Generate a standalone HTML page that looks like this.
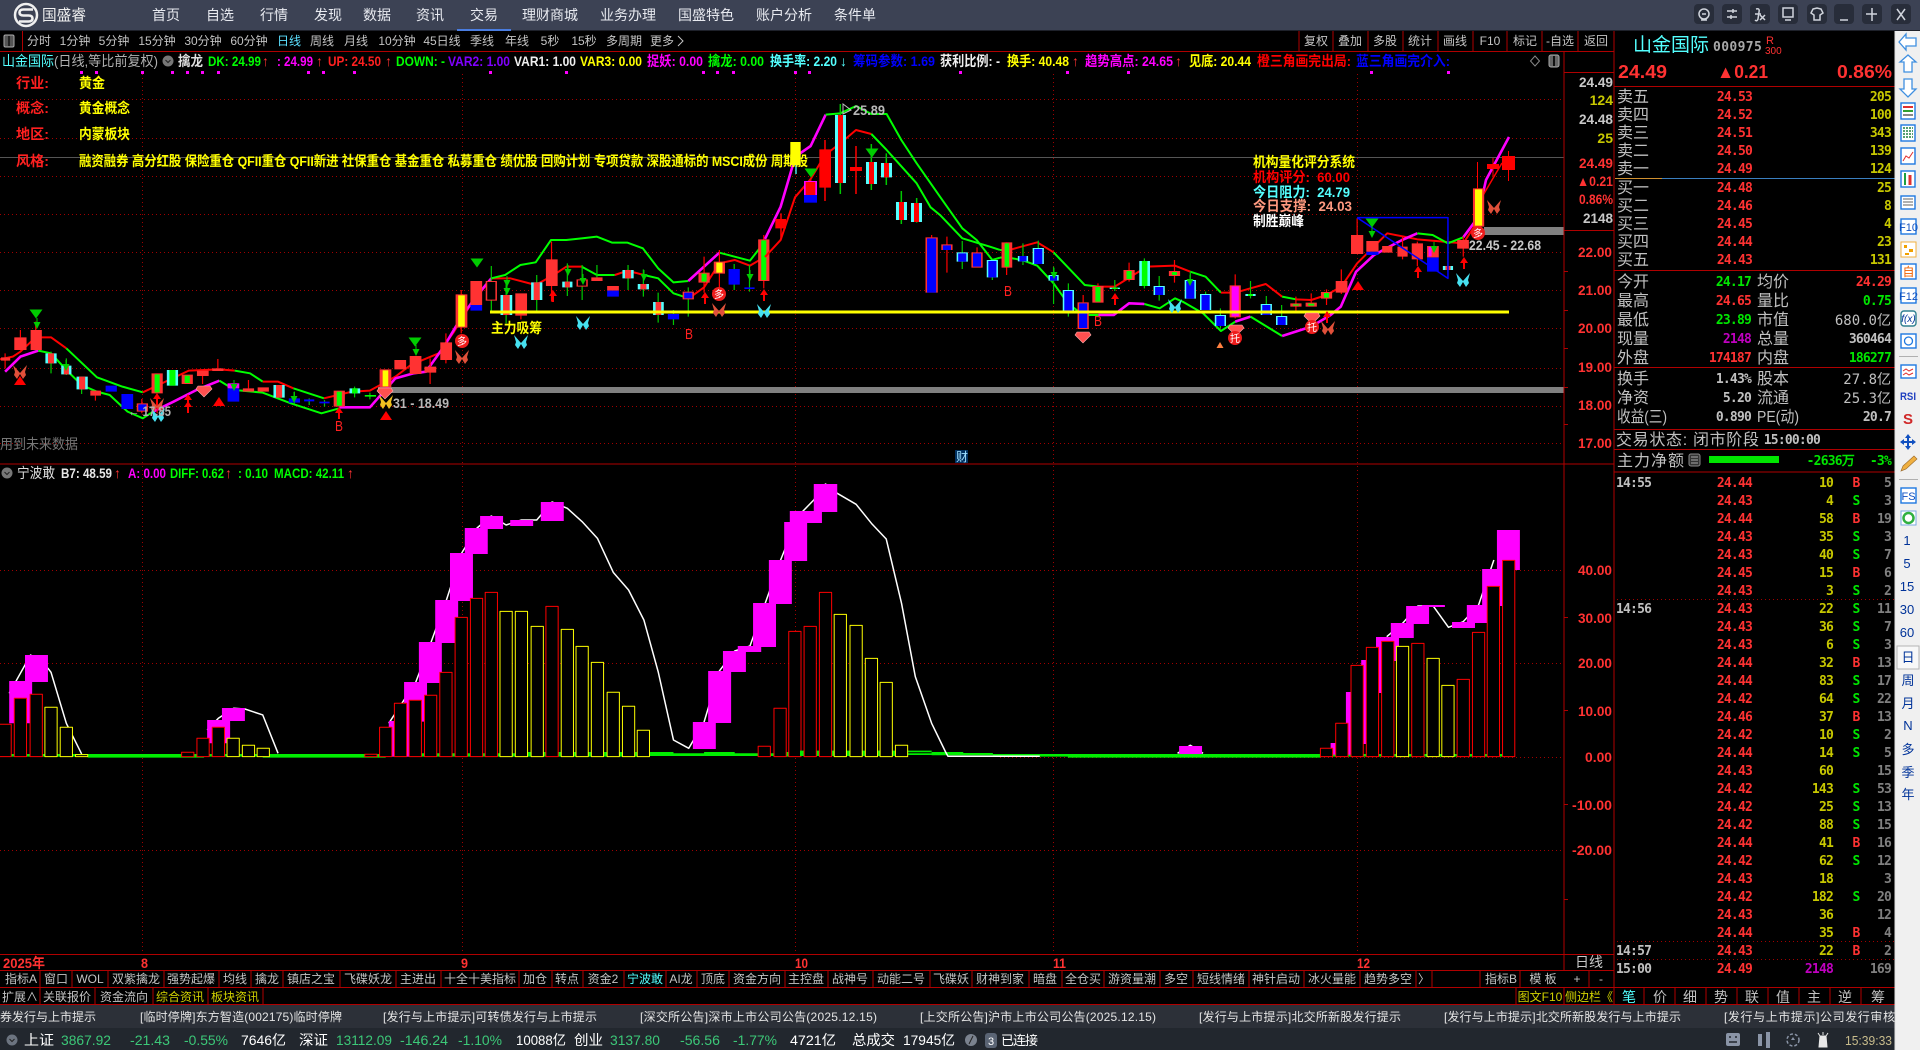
<!DOCTYPE html>
<html><head><meta charset="utf-8"><title>国盛睿</title>
<style>
html,body{margin:0;padding:0;background:#000;width:1920px;height:1050px;overflow:hidden}
svg{display:block;position:absolute;left:0;top:0}
text{font-family:"Liberation Sans","Noto Sans CJK SC",sans-serif;font-size:12px;white-space:pre}
.m{font-family:"DejaVu Sans Mono","Liberation Mono",monospace;font-size:13px;letter-spacing:-.8px;font-weight:bold}
.c{font-size:16px;fill:#c0c0c0}
.b{font-weight:bold}
.h{font-size:14px;font-weight:bold}
.e{text-anchor:end}
.mid{text-anchor:middle}
.nav{font-size:14px;fill:#e8eaf0;text-anchor:middle}
.tb{fill:#c4c4c4;font-size:12px;text-anchor:middle}
.r{fill:#ff3232}.g{fill:#00e600}.y{fill:#c8c800}.w{fill:#c0c0c0}.p{fill:#c000c0}.d{fill:#808080}
.ln{stroke:#b00000;stroke-width:1;fill:none}
.dot{stroke:#a00000;stroke-width:1;stroke-dasharray:1 3;fill:none}
.s{vector-effect:non-scaling-stroke;fill:none;stroke-linejoin:round}
.l2{stroke-width:2}
.bl{fill:#003399;font-size:13px;text-anchor:middle}
.ib{fill:#fff;stroke:#1e78e0;stroke-width:1.4}
</style></head><body>
<svg width="1920" height="1050" viewBox="0 0 1920 1050" xmlns="http://www.w3.org/2000/svg">
<defs>
<path id="bf" d="M0 1L-7-7-5 0-6 3-3 7 0 2 3 7 6 3 5 0 7-7z"/>
<path id="gem" d="M-6-5H6L8-2 0 6-8-2z"/>
<path id="tu" d="M0-5 6 4H-6z"/>
<path id="td" d="M-6.500-4.500H6.500L0 4.500z"/>
<path id="ga" d="M-3.500-3h7L0 4zM-.5-7H.5V-3H-.5z"/>
<path id="ra" d="M0-6 4 0H1V6H-1V0H-4z"/>
</defs>
<rect width="1920" height="1050" fill="#000"/>

<!-- title bar -->
<rect width="1920" height="30.500" fill="#3c4254"/>
<rect x="457" y="29" width="54" height="2" fill="#4a7de0"/>
<circle cx="26" cy="15" r="11" fill="none" stroke="#f0f0f0" stroke-width="2.500"/>
<path d="M33 9.500H23.500Q19.500 9.500 19.500 12.500T23.500 15.500H28.500Q32.500 15.500 32.500 18.500T28.500 21.500H19" fill="none" stroke="#f0f0f0" stroke-width="2.600"/>
<text x="42" y="20" fill="#f0f0f0" style="font-size:15px" textLength="44" lengthAdjust="spacingAndGlyphs">国盛睿</text>
<g>
<text x="166" y="20" class="nav">首页</text><text x="220" y="20" class="nav">自选</text><text x="274" y="20" class="nav">行情</text><text x="328" y="20" class="nav">发现</text><text x="377" y="20" class="nav">数据</text><text x="430" y="20" class="nav">资讯</text><text x="484" y="20" class="nav">交易</text><text x="550" y="20" class="nav">理财商城</text><text x="628" y="20" class="nav">业务办理</text><text x="706" y="20" class="nav">国盛特色</text><text x="784" y="20" class="nav">账户分析</text><text x="855" y="20" class="nav">条件单</text>
</g>
<g fill="#282d3a">
<rect x="1694" y="4" width="20" height="20" rx="4"/><rect x="1722" y="4" width="20" height="20" rx="4"/><rect x="1750" y="4" width="20" height="20" rx="4"/><rect x="1778" y="4" width="20" height="20" rx="4"/><rect x="1807" y="4" width="20" height="20" rx="4"/><rect x="1834" y="4" width="20" height="20" rx="4"/><rect x="1862" y="4" width="20" height="20" rx="4"/><rect x="1891" y="4" width="20" height="20" rx="4"/>
</g>
<g fill="none" stroke="#d0d4dc" stroke-width="1.500">
<circle cx="1704" cy="14" r="5"/><path d="M1702 14h4M1701 20h6"/>
<path d="M1727 11h10M1727 17h10M1733 9v4M1731 15v4"/>
<path d="M1756 9q4-1 3 3l-1 7q-1 3-3 1M1755 14h6M1760 15l5 5M1765 15l-5 5"/>
<path d="M1783 8h10v9h-10zM1785 20h6"/>
<path d="M1813 9l4-1 4 1 2 4-3 2v5h-6v-5l-3-2z"/>
<path d="M1840 20h8"/>
<path d="M1872 8v6M1866 14h6M1872 14v7M1872 14h5"/>
<path d="M1897 9l8 11M1905 9l-8 11"/>
</g>

<!-- toolbar -->
<rect x="4" y="35" width="10" height="12" rx="1.500" fill="#555" stroke="#aaa"/><path d="M9 36v10" stroke="#222" stroke-width="2"/>
<path class="ln" d="M22.500 31V51"/>
<g>
<text x="39" y="45" class="tb">分时</text><text x="75" y="45" class="tb">1分钟</text><text x="114" y="45" class="tb">5分钟</text><text x="157" y="45" class="tb">15分钟</text><text x="203" y="45" class="tb">30分钟</text><text x="249" y="45" class="tb">60分钟</text><text x="289" y="45" class="tb" style="fill:#5ce0ff">日线</text><text x="322" y="45" class="tb">周线</text><text x="356" y="45" class="tb">月线</text><text x="397" y="45" class="tb">10分钟</text><text x="442" y="45" class="tb">45日线</text><text x="482" y="45" class="tb">季线</text><text x="517" y="45" class="tb">年线</text><text x="550" y="45" class="tb">5秒</text><text x="584" y="45" class="tb">15秒</text><text x="624" y="45" class="tb">多周期</text><text x="662" y="45" class="tb">更多</text><path d="M678 36l5 5-5 5" fill="none" stroke="#c4c4c4"/>
</g>
<g>
<path class="ln" d="M1299 31V51M1333 31V51M1368 31V51M1403 31V51M1438 31V51M1473 31V51M1507 31V51M1542 31V51M1578 31V51"/>
<text x="1316" y="45" class="tb">复权</text><text x="1350" y="45" class="tb">叠加</text><text x="1385" y="45" class="tb">多股</text><text x="1420" y="45" class="tb">统计</text><text x="1455" y="45" class="tb">画线</text><text x="1490" y="45" class="tb">F10</text><text x="1525" y="45" class="tb">标记</text><text x="1560" y="45" class="tb">-自选</text><text x="1596" y="45" class="tb">返回</text>
</g>
<path class="ln" d="M0 51.500H1614M1564 72.500H1614"/>

<!-- header text -->
<g>
<text x="2" y="66" fill="#54ffff" style="font-size:14px" textLength="52" lengthAdjust="spacingAndGlyphs">山金国际</text>
<text x="54" y="66" fill="#b0b0b0" style="font-size:14px" textLength="104" lengthAdjust="spacingAndGlyphs">(日线,等比前复权)</text>
<circle cx="168" cy="61" r="5.500" fill="#777"/><path d="M165.500 60l2.500 2.500 2.500-2.500" stroke="#222" fill="none"/>
<text x="178" y="66" fill="#e0e0e0" class="h" textLength="25" lengthAdjust="spacingAndGlyphs">擒龙</text>
<text x="208" y="66" fill="#00ff00" class="h" textLength="53" lengthAdjust="spacingAndGlyphs">DK: 24.99</text><text x="262" y="66" fill="#ff3232" style="font-size:14px">↑</text>
<text x="277" y="66" fill="#ff00ff" class="h" textLength="36" lengthAdjust="spacingAndGlyphs">: 24.99</text><text x="316" y="66" fill="#ff3232" style="font-size:14px">↑</text>
<text x="328" y="66" fill="#ff2020" class="h" textLength="53" lengthAdjust="spacingAndGlyphs">UP: 24.50</text><text x="385" y="66" fill="#ff3232" style="font-size:14px">↑</text>
<text x="396" y="66" fill="#00ff00" class="h" textLength="49" lengthAdjust="spacingAndGlyphs">DOWN: -</text>
<text x="448" y="66" fill="#8000ff" class="h" textLength="62" lengthAdjust="spacingAndGlyphs">VAR2: 1.00</text>
<text x="514" y="66" fill="#f0f0f0" class="h" textLength="62" lengthAdjust="spacingAndGlyphs">VAR1: 1.00</text>
<text x="580" y="66" fill="#ffff00" class="h" textLength="62" lengthAdjust="spacingAndGlyphs">VAR3: 0.00</text>
<text x="647" y="66" fill="#ff00ff" class="h" textLength="56" lengthAdjust="spacingAndGlyphs">捉妖: 0.00</text>
<text x="708" y="66" fill="#00ff00" class="h" textLength="56" lengthAdjust="spacingAndGlyphs">擒龙: 0.00</text>
<text x="770" y="66" fill="#54ffff" class="h" textLength="67" lengthAdjust="spacingAndGlyphs">换手率: 2.20</text><text x="840" y="66" fill="#54ffff" style="font-size:14px">↓</text>
<text x="853" y="66" fill="#0000ff" class="h" textLength="82" lengthAdjust="spacingAndGlyphs">筹码参数: 1.69</text>
<text x="940" y="66" fill="#f0f0f0" class="h" textLength="60" lengthAdjust="spacingAndGlyphs">获利比例: -</text>
<text x="1007" y="66" fill="#ffff00" class="h" textLength="62" lengthAdjust="spacingAndGlyphs">换手: 40.48</text><text x="1072" y="66" fill="#ff3232" style="font-size:14px">↑</text>
<text x="1085" y="66" fill="#ff00ff" class="h" textLength="88" lengthAdjust="spacingAndGlyphs">趋势高点: 24.65</text><text x="1175" y="66" fill="#ff3232" style="font-size:14px">↑</text>
<text x="1189" y="66" fill="#ffff00" class="h" textLength="62" lengthAdjust="spacingAndGlyphs">见底: 20.44</text>
<text x="1257" y="66" fill="#ff0000" class="h" textLength="94" lengthAdjust="spacingAndGlyphs">橙三角画完出局:</text>
<text x="1356" y="66" fill="#0000ff" class="h" textLength="94" lengthAdjust="spacingAndGlyphs">蓝三角画完介入:</text>
</g>
<path d="M1535 56l4.500 5-4.500 5-4.500-5z" fill="none" stroke="#888"/>
<rect x="1549" y="55" width="10" height="12" rx="2" fill="#666" stroke="#aaa"/><path d="M1554 56v10" stroke="#111" stroke-width="2"/>
<g fill="#ff00ff">
<rect x="80" y="71" width="3" height="3"/><rect x="95" y="71" width="3" height="3"/><rect x="141" y="71" width="3" height="3"/><rect x="171" y="71" width="3" height="3"/><rect x="186" y="71" width="3" height="3"/><rect x="201" y="71" width="3" height="3"/><rect x="217" y="71" width="3" height="3"/><rect x="307" y="71" width="3" height="3"/><rect x="322" y="71" width="3" height="3"/><rect x="353" y="71" width="3" height="3"/><rect x="489" y="71" width="3" height="3"/><rect x="565" y="71" width="3" height="3"/><rect x="702" y="71" width="3" height="3"/><rect x="716" y="71" width="3" height="3"/><rect x="732" y="71" width="3" height="3"/><rect x="794" y="71" width="3" height="3"/><rect x="808" y="71" width="3" height="3"/><rect x="959" y="71" width="3" height="3"/><rect x="1066" y="71" width="3" height="3"/><rect x="1127" y="71" width="3" height="3"/><rect x="1370" y="71" width="3" height="3"/><rect x="1447" y="71" width="3" height="3"/>
</g>

<!-- grid -->
<path class="dot" d="M0 99.500H1564M0 138.500H1564M0 176.500H1564M0 214.500H1564M0 252.500H1564M0 290.500H1564M0 328.500H1564M0 368.500H1564M0 406.500H1564M0 443.500H1564M0 570.500H1564M0 663.500H1564M1000 757.500H1564M0 850.500H1564"/>
<path class="dot" d="M142.500 74V954M462.500 74V954M795.500 74V954M1053.500 74V954M1357.500 74V954"/>
<path d="M0 157.500H1564" stroke="#555" stroke-width="1"/>
<rect x="378" y="387" width="1186" height="6" fill="#808080"/>
<rect x="1484" y="227" width="80" height="8" fill="#808080"/>

<!-- G4 main candles left -->
<g transform="translate(0 200) scale(.5102 .3333)">
<g>
<polyline class="s l2" stroke="#ff0000" points="0,478 25,470 40,455 70,412 100,412 130,445"/>
<polyline class="s l2" stroke="#00ff00" points="130,445 190,532 240,560 280,577"/>
<polyline class="s l2" stroke="#ff0000" points="280,577 370,512 430,508 460,512"/>
<polyline class="s l2" stroke="#00ff00" points="460,512 490,520 515,545"/>
<polyline class="s l2" stroke="#ff0000" points="515,545 545,545 575,565"/>
<polyline class="s l2" stroke="#00ff00" points="575,565 635,595"/>
<polyline class="s l2" stroke="#ff0000" points="635,595 690,575 725,572 775,530 805,495 860,460 890,395 920,320 963,235 1000,235 1050,255 1085,225 1110,200 1140,200"/>
<polyline class="s l2" stroke="#00ff00" points="1140,200 1170,225 1205,225"/>
<polyline class="s l2" stroke="#ff0000" points="1205,225 1230,212 1262,225"/>
<polyline class="s l2" stroke="#00ff00" points="1262,225 1290,235 1320,280 1350,295"/>
<polyline class="s l2" stroke="#ff0000" points="1350,295 1380,262 1410,190 1440,180 1470,197 1500,170"/>
<polyline class="s" style="stroke-width:2.600" stroke="#ff00ff" points="10,515 40,470 75,452"/>
<polyline class="s l2" stroke="#00ff00" points="75,452 100,460 130,510 160,555 190,575 215,585 250,635 280,655 300,635"/>
<polyline class="s" style="stroke-width:2.600" stroke="#ff00ff" points="300,635 340,605 385,570 430,542"/>
<polyline class="s l2" stroke="#00ff00" points="430,542 460,570 515,578 570,610 630,640 665,625"/>
<polyline class="s" style="stroke-width:2.600" stroke="#ff00ff" points="665,622 725,622 775,535 810,520 835,515 870,440 905,350 933,290 963,235"/>
<polyline class="s l2" stroke="#00ff00" points="963,235 990,225 1020,195 1050,187 1080,120 1110,120 1140,115 1170,110 1200,128 1230,128 1260,145 1290,205 1320,247 1349,243"/>
<polyline class="s" style="stroke-width:2.600" stroke="#ff00ff" points="1349,243 1410,158"/>
<polyline class="s l2" stroke="#00ff00" points="1410,158 1440,170 1470,182 1497,129"/>
</g>
<path class="s" stroke="#ff0000" style="stroke-width:1.200" d="M10 460V505M40 390V412M70 365V390M187 587V602M397 528V552M427 477V505M487 540V565M843 475V552M874 400V490M904 270V400M1021 347V358M1081 125V305M1410 150V265M1497 105V265M1380 170V278M308 597V640M278 597V640"/>
<path class="s" stroke="#00c800" style="stroke-width:1.200" d="M100 455V520M130 475V525M160 530V582M577 575V612M606 595V615M636 600V620M695 560V592M725 578V598M992 240V370M1112 190V288M1141 195V300M1170 195V232M1231 195V270M1261 208V290M1290 278V368M1320 330V375M1349 262V350M1439 192V270M1469 195V275M1052 225V335M963 198V335"/>
<path fill="#54ffff" d="M89 460h22v30h-22zM120 497h20v26h-20zM150 530h22v38h-22zM536 555h22v38h-22zM981 285h23v60h-23zM1041 247h22v53h-22zM1102 245h20v17h-20zM1220 210h22v25h-22zM1250 252h22v16h-22zM1280 306h21v39h-21zM327 510h22v47h-22zM685 565h21v15h-21z"/>
<path fill="#ff3232" d="M2 472h18v10h-18zM28 412h24v38h-24zM60 390h22v60h-22zM177 572h21v15h-21zM386 512h23v16h-23zM416 505h22v8h-22zM476 565h22v10h-22zM505 562h22v13h-22zM773 480h23v28h-23zM803 468h23v54h-23zM832 500h23v18h-23zM863 427h23v53h-23zM922 243h23v72h-23zM1010 280h23v67h-23zM1070 178h23v80h-23zM1159 232h22v11h-22zM1190 258h23v14h-23zM94 460h12v30h-12zM125 497h10v26h-10zM155 530h12v38h-12zM541 555h12v38h-12zM986 285h13v60h-13zM1046 247h12v53h-12zM1107 245h10v17h-10zM1225 210h12v25h-12zM1255 252h12v16h-12zM1285 306h11v39h-11z"/>
<path fill="#ff3232" d="M297 520h22v60h-22zM356 524h22v28h-22zM654 572h22v48h-22zM1369 218h22v30h-22zM1486 118h22v125h-22zM268 610h22v25h-22zM1338 275h22v23h-22zM952 243h22v59h-22zM1130 238h22v22h-22zM744 508h23v54h-23zM893 283h23v100h-23zM1399 185h22v36h-22z"/>
<path fill="#00ff00" d="M303 523h10v54h-10zM362 527h10v22h-10zM660 575h10v42h-10zM1375 221h10v24h-10zM1492 121h10v119h-10zM332 510h12v47h-12zM690 565h11v15h-11zM715 585h22v5h-22z"/>
<path fill="#000" d="M955 246h16v53h-16zM1133 241h16v16h-16z"/>
<path fill="#ffff00" d="M750 511h11v48h-11zM898 286h13v94h-13zM1404 188h12v30h-12z"/>
<path fill="#0000ff" d="M207 557h22v18h-22zM238 582h23v45h-23zM446 565h23v40h-23zM566 595h22v13h-22zM596 598h20v6h-20zM626 605h20v5h-20zM1190 272h23v18h-23zM1309 342h22v16h-22zM1428 207h22v47h-22zM1459 262h20v5h-20zM922 315h23v17h-23zM271 613h16v19h-16zM1341 278h16v17h-16z"/>
<path fill="#ff00ff" d="M446 550h23v15h-23z"/>
</g>

<!-- G12 peak -->
<g transform="translate(760 100) scale(.3333)">
<polyline class="s l2" stroke="#ff0000" points="15,471 62,420 105,292 152,237 195,165 241,130 288,90 334,102"/>
<polyline class="s" style="stroke-width:2.600" stroke="#ff00ff" points="15,417 62,320 106,170 152,138 197,44"/>
<polyline class="s l2" stroke="#00ff00" points="197,44 241,40 288,18 334,42 380,42 424,120 470,190 540,290 607,385 650,420 697,480 720,473"/>
<polyline class="s l2" stroke="#00ff00" points="334,102 380,150 470,250 512,322 540,345 607,415 690,440 720,450"/>
<path class="s" stroke="#ff0000" style="stroke-width:1.500" d="M63 340V415M152 235V305M195 120V303M288 138V282"/>
<path class="s" stroke="#00c800" style="stroke-width:1.500" d="M241 12V282M334 132V270M379 160V255M424 273V372M470 294V368"/>
<path fill="#54ffff" d="M106 195h4v27h-4zM225 45h33v204h-33zM318 186h33v66h-33zM363 189h33v43h-33zM408 306h33v54h-33zM453 309h33v57h-33z"/>
<path fill="#ffff00" d="M91 126h31v69h-31z"/>
<path fill="#ff00ff" d="M132 243h39v42h-39z"/>
<path fill="#0000ff" d="M132 285h39v23h-39z"/>
<path fill="#ff0000" d="M46 357h32v28h-32zM137 246h29v39h-29zM178 148h35v115h-35zM270 201h36v12h-36zM234 45h15v204h-15zM327 186h15v66h-15zM372 189h15v43h-15zM417 306h15v54h-15zM462 309h15v57h-15z"/>
</g>

<!-- last line segments real coords -->
<polyline points="1478,216 1486,180 1509,137" fill="none" stroke="#ff00ff" stroke-width="2.600"/>
<polyline points="1478,220 1482,197 1502,163" fill="none" stroke="#ff0000" stroke-width="1.500"/>

<!-- G5 right candles -->
<g transform="translate(800 200) scale(.5102 .3333)">
<polyline class="s l2" stroke="#00ff00" points="392,150 410,150"/>
<polyline class="s l2" stroke="#ff0000" points="410,150 465,127 497,157"/>
<polyline class="s l2" stroke="#00ff00" points="497,157 530,210 558,255 585,260"/>
<polyline class="s l2" stroke="#ff0000" points="585,260 617,260 680,200 735,197 765,215"/>
<polyline class="s l2" stroke="#00ff00" points="765,215 795,230 825,278"/>
<polyline class="s l2" stroke="#ff0000" points="825,278 853,278 883,265 913,252 945,290"/>
<polyline class="s l2" stroke="#00ff00" points="945,290 972,298"/>
<polyline class="s l2" stroke="#ff0000" points="972,298 1002,300 1032,285 1061,260 1092,190 1151,100 1210,118 1300,130 1330,60"/>
<polyline class="s l2" stroke="#00ff00" points="392,173 405,172 435,180 465,197 497,250 525,310 555,345 585,345"/>
<polyline class="s" style="stroke-width:2.600" stroke="#ff00ff" points="585,345 615,345 645,310 675,312"/>
<polyline class="s l2" stroke="#00ff00" points="675,312 705,325 735,295 750,305 790,340 825,393 853,365"/>
<polyline class="s" style="stroke-width:2.600" stroke="#ff00ff" points="853,365 883,350"/>
<polyline class="s l2" stroke="#00ff00" points="883,350 945,408"/>
<polyline class="s" style="stroke-width:2.600" stroke="#ff00ff" points="945,408 1002,380 1040,345 1060,320 1090,215 1125,165 1180,120 1210,100"/>
<polyline class="s l2" stroke="#00ff00" points="1210,100 1240,105 1270,130 1300,112"/>
<polyline class="s" style="stroke-width:2.600" stroke="#ff00ff" points="1300,112 1330,50"/>
<path class="s" stroke="#ff0000" style="stroke-width:1.200" d="M258 105V112M288 110V218M347 142V157M405 127V225M555 285V307M584 250V258M734 180V248M853 223V355M972 290V335M1002 280V308M1032 268V315M1061 208V282M1092 55V105M1181 110V178M1210 125V198M1300 110V170M645 188V245"/>
<path class="s" stroke="#00c800" style="stroke-width:1.200" d="M318 123V207M377 230V240M437 130V195M467 122V145M497 200V312M526 250V350M617 240V273M675 175V265M704 228V302M765 215V240M795 275V282M824 325V385M883 243V295M914 288V312M944 315V348M1270 110V215"/>
<path fill="#54ffff" d="M307 157h22v28h-22zM366 180h22v52h-22zM427 168h20v16h-20zM456 144h22v48h-22zM487 225h20v17h-20zM515 270h22v63h-22zM693 258h22v27h-22zM754 240h22v56h-22zM784 282h22v48h-22zM813 345h22v33h-22zM903 312h22v33h-22zM933 348h22v27h-22zM665 183h21v75h-21zM607 263h20v4h-20zM873 282h20v6h-20zM1260 198h20v12h-20z"/>
<path fill="#0000ff" d="M310 160h16v25h-16zM369 183h16v49h-16zM430 168h14v16h-14zM459 147h16v45h-16zM490 228h14v14h-14zM518 273h16v60h-16zM696 261h16v24h-16zM757 243h16v53h-16zM787 285h16v45h-16zM816 348h16v30h-16zM906 315h16v30h-16zM936 351h16v24h-16zM1110 155h24v10h-24zM1229 172h23v43h-23z"/>
<path fill="#ff3232" d="M246 112h24v166h-24zM277 133h22v17h-22zM336 157h22v46h-22zM544 307h22v80h-22zM395 127h21v76h-21zM573 258h22v50h-22zM634 210h22v30h-22zM723 213h22v15h-22zM1021 276h22v20h-22zM842 256h22v96h-22zM961 310h22v10h-22zM991 308h22v12h-22zM1050 243h23v35h-23zM1080 105h24v57h-24zM1110 123h24v32h-24zM1141 138h20v20h-20zM1171 140h20v30h-20zM1199 130h22v48h-22zM1229 138h23v34h-23zM1265 198h10v12h-10zM1288 120h23v26h-23zM1319 -35h22v115h-22z"/>
<path fill="#0000ff" d="M249 115h18v163h-18zM280 136h16v14h-16zM339 160h16v40h-16zM547 310h16v74h-16z"/>
<path fill="#00ff00" d="M401 130h9v70h-9zM579 261h10v44h-10zM640 213h10v24h-10zM729 216h10v9h-10zM1027 279h10v14h-10zM670 183h11v75h-11zM611 263h12v4h-12zM878 282h10v6h-10zM966 313h12v4h-12zM996 311h12v6h-12z"/>
<path fill="#ff00ff" d="M846 259h14v90h-14zM1232 141h6v28h-6z"/>
<path fill="#ffff00" d="M1323 -32h14v109h-14z"/>
<path class="s" stroke="#0000ff" style="stroke-width:1.500" d="M1092 53H1270V235L1092 53"/>
</g>

<path d="M1477.500 162V189M1493 158V176M1508.500 151V181" stroke="#ff0000"/>
<rect x="1487" y="164" width="12" height="5" fill="#ff0000"/><rect x="1502" y="156" width="13" height="14" fill="#ff0000"/>

<rect x="490" y="310.500" width="1019" height="3" fill="#ffff00"/>

<!-- symbols -->
<g fill="#00cc00">
<use href="#td" x="36" y="314"/><use href="#td" x="415" y="342"/><use href="#td" x="477" y="263"/><use href="#td" x="1372" y="223"/><use href="#td" x="811" y="173"/><use href="#td" x="872" y="153"/>
<use href="#ga" x="37" y="325"/><use href="#ga" x="66" y="367"/><use href="#ga" x="234" y="387"/><use href="#ga" x="294" y="399"/><use href="#ga" x="416" y="352"/><use href="#ga" x="507" y="283"/><use href="#ga" x="507" y="291"/><use href="#ga" x="568" y="272"/><use href="#ga" x="583" y="281"/><use href="#ga" x="644" y="277"/><use href="#ga" x="750" y="277"/><use href="#ga" x="1054" y="275"/><use href="#ga" x="1190" y="282"/><use href="#ga" x="1372" y="234"/><use href="#ga" x="1434" y="249"/>
</g>
<g fill="#ff0000">
<use href="#tu" x="20" y="381"/><use href="#tu" x="219" y="402"/><use href="#tu" x="386" y="416"/><use href="#tu" x="1358" y="286"/>
<use href="#ra" x="157" y="399"/><use href="#ra" x="188" y="400"/><use href="#ra" x="188" y="407"/><use href="#ra" x="339" y="413"/><use href="#ra" x="553" y="296"/><use href="#ra" x="705" y="298"/><use href="#ra" x="764" y="295"/><use href="#ra" x="1115" y="299"/><use href="#ra" x="1418" y="272"/><use href="#ra" x="1464" y="263"/><use href="#ra" x="1327" y="317"/>
</g>
<path d="M1220 342l3.500 6h-7z" fill="#ff8040"/>
<g fill="#e0503a">
<use href="#bf" x="20" y="372"/><use href="#bf" x="462" y="357"/><use href="#bf" x="719" y="310"/><use href="#bf" x="1328" y="328"/><use href="#bf" x="1494" y="207"/><use href="#bf" x="157" y="405"/>
</g>
<g fill="#46e0f0">
<use href="#bf" x="158" y="415"/><use href="#bf" x="521" y="342"/><use href="#bf" x="583" y="323"/><use href="#bf" x="764" y="311"/><use href="#bf" x="1175" y="306"/><use href="#bf" x="1463" y="280"/>
</g>
<use href="#bf" x="386" y="402" fill="#f0c020"/>
<g fill="#ff5050" stroke="#ffb0b0" stroke-width=".6">
<use href="#gem" x="204" y="391"/><use href="#gem" x="385" y="393"/><use href="#gem" x="1083" y="337"/><use href="#gem" x="1236" y="330"/><use href="#gem" x="1312" y="318"/>
</g>
<g fill="#ee1c1c">
<circle cx="462" cy="341" r="7"/><circle cx="719" cy="294" r="7"/><circle cx="1312" cy="327" r="7"/><circle cx="1235" cy="338" r="7"/><circle cx="1478" cy="233" r="7"/>
</g>
<g fill="#fff">
<text x="457" y="345" style="font-size:10px">多</text><text x="714" y="298" style="font-size:10px">多</text><text x="1307" y="331" style="font-size:10px">托</text><text x="1230" y="342" style="font-size:10px">托</text><text x="1473" y="237" style="font-size:10px">多</text>
</g>

<!-- chart labels -->
<g fill="#ff2020">
<text x="16" y="88" class="h" textLength="33" lengthAdjust="spacingAndGlyphs">行业:</text><text x="16" y="113" class="h" textLength="33" lengthAdjust="spacingAndGlyphs">概念:</text><text x="16" y="139" class="h" textLength="33" lengthAdjust="spacingAndGlyphs">地区:</text><text x="16" y="166" class="h" textLength="33" lengthAdjust="spacingAndGlyphs">风格:</text>
</g>
<g fill="#ffff00">
<text x="79" y="88" class="h" textLength="26" lengthAdjust="spacingAndGlyphs">黄金</text><text x="79" y="113" class="h" textLength="51" lengthAdjust="spacingAndGlyphs">黄金概念</text><text x="79" y="139" class="h" textLength="51" lengthAdjust="spacingAndGlyphs">内蒙板块</text>
<text x="79" y="166" class="h" textLength="729" lengthAdjust="spacingAndGlyphs">融资融券 高分红股 保险重仓 QFII重仓 QFII新进 社保重仓 基金重仓 私募重仓 绩优股 回购计划 专项贷款 深股通标的 MSCI成份 周期股</text>
</g>
<text x="491" y="333" fill="#ffff00" class="h" textLength="51" lengthAdjust="spacingAndGlyphs">主力吸筹</text>
<text x="0" y="449" fill="#777" style="font-size:14px" textLength="78" lengthAdjust="spacingAndGlyphs">用到未来数据</text>
<text x="393" y="408" fill="#b8b8b8" class="h" textLength="56" lengthAdjust="spacingAndGlyphs">31 - 18.49</text>
<text x="128" y="416" fill="#b0b0b0" class="h" textLength="43" lengthAdjust="spacingAndGlyphs">← 17.85</text>
<text x="853" y="115" fill="#b8b8b8" class="h" textLength="32" lengthAdjust="spacingAndGlyphs">25.89</text>
<path d="M843 104v10l8-4z" fill="none" stroke="#c0c0c0"/>
<text x="1469" y="250" fill="#c8c8c8" class="h" textLength="72" lengthAdjust="spacingAndGlyphs">22.45 - 22.68</text>
<g fill="#ff2020">
<text x="335" y="431" style="font-size:15px" textLength="8" lengthAdjust="spacingAndGlyphs">B</text><text x="685" y="339" style="font-size:15px" textLength="8" lengthAdjust="spacingAndGlyphs">B</text><text x="1004" y="296" style="font-size:15px" textLength="8" lengthAdjust="spacingAndGlyphs">B</text><text x="1094" y="326" style="font-size:15px" textLength="8" lengthAdjust="spacingAndGlyphs">B</text>
</g>
<g>
<text x="1253" y="167" fill="#ffff00" class="h" textLength="102" lengthAdjust="spacingAndGlyphs">机构量化评分系统</text>
<text x="1253" y="182" fill="#ff0000" class="h" textLength="97" lengthAdjust="spacingAndGlyphs">机构评分:  60.00</text>
<text x="1253" y="197" fill="#54ffff" class="h" textLength="97" lengthAdjust="spacingAndGlyphs">今日阻力:  24.79</text>
<text x="1253" y="211" fill="#ff9a80" class="h" textLength="99" lengthAdjust="spacingAndGlyphs">今日支撑:  24.03</text>
<text x="1253" y="226" fill="#ffffff" class="h" textLength="51" lengthAdjust="spacingAndGlyphs">制胜巅峰</text>
</g>
<rect x="955" y="450" width="13" height="13" fill="#003060"/><text x="956" y="461" fill="#a0e0ff">财</text>

<!-- indicator header -->
<path class="ln" d="M0 464H1614"/>
<circle cx="7" cy="473" r="5.500" fill="#777"/><path d="M4.500 472l2.500 2.500 2.500-2.500" stroke="#222" fill="none"/>
<g>
<text x="17" y="478" fill="#e0e0e0" style="font-size:14px" textLength="38" lengthAdjust="spacingAndGlyphs">宁波敢</text>
<text x="61" y="478" fill="#e8e8e8" class="h" textLength="51" lengthAdjust="spacingAndGlyphs">B7: 48.59</text><text x="114" y="478" fill="#ff3232" style="font-size:14px">↑</text>
<text x="128" y="478" fill="#ff00ff" class="h" textLength="38" lengthAdjust="spacingAndGlyphs">A: 0.00</text>
<text x="170" y="478" fill="#00ff00" class="h" textLength="54" lengthAdjust="spacingAndGlyphs">DIFF: 0.62</text><text x="225" y="478" fill="#ff3232" style="font-size:14px">↑</text>
<text x="238" y="478" fill="#00ff00" class="h" textLength="30" lengthAdjust="spacingAndGlyphs">: 0.10</text>
<text x="274" y="478" fill="#00ff00" class="h" textLength="70" lengthAdjust="spacingAndGlyphs">MACD: 42.11</text><text x="347" y="478" fill="#ff3232" style="font-size:14px">↑</text>
</g>

<!-- indicator chart -->
<g transform="translate(0 480) scale(.5102 .3333)">
<path fill="#00ee00" d="M0 822h172v8h-172zM172 822h228v11h-228zM400 822h115v8h-115zM515 822h241v11h-241zM756 820h274v10h-274zM1030 816h240v14h-240zM1270 816h50v12h-50zM1320 820h60v8h-60zM1380 816h60v12h-60zM1440 820h80v8h-80zM1520 816h48v14h-48z"/>
<polyline class="s" stroke="#fff" style="stroke-width:1.500" points="18,640 60,525 94,565 100,577 130,730 160,822"/>
<polyline class="s" stroke="#fff" style="stroke-width:1.500" points="406,750 428,715 458,685 480,687 515,705 545,820"/>
<polyline class="s" stroke="#fff" style="stroke-width:1.500" points="762,730 815,606 845,486 875,360 905,219 935,144 963,108 992,135 1022,120 1052,120 1082,66 1112,85 1141,125 1171,175 1202,277 1232,330 1262,420 1290,575 1320,780 1350,805 1380,726 1410,573 1440,513 1470,498 1500,369 1530,240 1560,126"/>
<path fill="#ff00ff" d="M18 603h45v127h-45zM49 525h45v81h-45zM406 720h45v70h-45zM435 684h45v39h-45zM762 723h45v107h-45zM792 606h45v119h-45zM821 486h45v123h-45zM853 360h45v129h-45zM882 219h45v144h-45zM911 144h45v78h-45zM941 108h45v39h-45zM1000 120h45v18h-45zM1060 66h45v57h-45zM1358 726h45v81h-45zM1388 573h45v156h-45zM1417 513h45v63h-45zM1446 498h46v18h-46zM1476 369h45v132h-45zM1507 240h45v132h-45zM1537 126h31v117h-31z"/>
<path class="s" stroke="#ff0000" style="stroke-width:1;fill:#000" d="M-2 733V830H22V733zM28 655V830H52V655zM59 643V830H83V643zM356 817V830H380V817zM386 775V830H410V775zM416 742V830H440V742zM715 823V830H739V823zM744 742V830H768V742zM773 670V830H797V670zM802 661V830H826V661zM832 646V830H856V646zM862 577V830H886V577zM892 412V830H916V412zM922 355V830H946V355zM951 337V830H975V337zM1070 379V830H1094V379zM1486 799V830H1510V799zM1517 685V830H1541V685zM1546 454V830H1570V454z"/>
<path class="s" stroke="#ffff00" style="stroke-width:1;fill:#000" d="M88 682V830H112V682zM118 742V830H142V742zM148 824V830H172V824zM445 775V830H469V775zM475 796V830H499V796zM504 805V830H528V805zM980 394V830H1004V394zM1010 394V830H1034V394zM1041 439V830H1065V439zM1100 448V830H1124V448zM1129 499V830H1153V499zM1159 547V830H1183V547zM1190 637V830H1214V637zM1220 679V830H1244V679zM1249 751V830H1273V751z"/>
</g>
<g transform="translate(800 480) scale(.5102 .3333)">
<path fill="#00ee00" d="M0 812h210v16h-210zM210 812h48v5h-48zM210 820h48v5h-48zM258 816h62v10h-62zM320 819h58v7h-58zM378 822h147v8h-147zM525 822h495v11h-495zM1020 822h380v8h-380z"/>
<polyline class="s" stroke="#fff" style="stroke-width:1.500" points="-15,126 27,60 50,12 73,40 110,73 140,130 169,177 199,370 226,590 258,730 285,815 290,829 470,829"/>
<polyline class="s" stroke="#fff" style="stroke-width:1.500" points="740,820 765,796 790,820"/>
<polyline class="s" stroke="#fff" style="stroke-width:1.500" points="1150,470 1181,430 1211,378 1241,378 1271,442 1300,425 1330,375 1360,240"/>
<path fill="#ff00ff" d="M-20 93h63v36h-63zM-20 129h34v114h-34zM27 12h46v84h-46zM743 798h45v24h-45zM1040 789h45v35h-45zM1070 636h45v156h-45zM1100 540h45v99h-45zM1129 471h45v72h-45zM1158 429h45v45h-45zM1188 378h45v54h-45zM1219 375h45v6h-45zM1278 426h45v18h-45zM1307 375h45v54h-45zM1337 267h45v111h-45zM1366 150h45v120h-45z"/>
<path class="s" stroke="#ff0000" style="stroke-width:1;fill:#000" d="M8 439V830H32V439zM38 337V830H62V337zM1020 805V830H1044V805zM1050 730V830H1074V730zM1080 556V830H1104V556zM1110 502V830H1134V502zM1140 484V830H1164V484zM1199 490V830H1223V490zM1288 598V830H1312V598zM1318 457V830H1342V457zM1347 319V830H1371V319zM1377 241V830H1401V241z"/>
<path class="s" stroke="#ffff00" style="stroke-width:1;fill:#000" d="M67 403V830H91V403zM98 436V830H122V436zM128 535V830H152V535zM157 607V830H181V607zM187 796V830H211V796zM1169 499V830H1193V499zM1229 535V830H1253V535zM1258 616V830H1282V616z"/>
</g>

<!-- axis -->
<path class="ln" d="M1564 52V970M1614 31V1005M1564 230.500H1614M1564 954.500H1614M0 954.500H1564M0 970.500H1614M0 987.500H1895M0 1004.500H1895"/>
<path class="ln" d="M1564 271.500h4M1564 310.500h4M1564 348.500h4M1564 387.500h4M1564 424.500h4M1564 617.500h4M1564 710.500h4M1564 804.500h4M1564 899.500h4"/>
<g>
<text x="1579" y="87" fill="#c8c8c8" class="h" textLength="34" lengthAdjust="spacingAndGlyphs">24.49</text>
<text x="1613" y="105" fill="#c8c800" class="h e">124</text>
<text x="1579" y="124" fill="#c8c8c8" class="h" textLength="34" lengthAdjust="spacingAndGlyphs">24.48</text>
<text x="1613" y="143" fill="#c8c800" class="h e">25</text>
<text x="1579" y="168" fill="#ff3232" class="h" textLength="34" lengthAdjust="spacingAndGlyphs">24.49</text>
<text x="1577" y="186" fill="#ff3232" class="h" textLength="36" lengthAdjust="spacingAndGlyphs">▲0.21</text>
<text x="1579" y="204" fill="#ff3232" class="h" textLength="34" lengthAdjust="spacingAndGlyphs">0.86%</text>
<text x="1583" y="223" fill="#c8c8c8" class="h" textLength="30" lengthAdjust="spacingAndGlyphs">2148</text>
</g>
<g fill="#ff3232">
<text x="1578" y="257" class="h" textLength="34" lengthAdjust="spacingAndGlyphs">22.00</text><text x="1578" y="295" class="h" textLength="34" lengthAdjust="spacingAndGlyphs">21.00</text><text x="1578" y="333" class="h" textLength="34" lengthAdjust="spacingAndGlyphs">20.00</text><text x="1578" y="372" class="h" textLength="34" lengthAdjust="spacingAndGlyphs">19.00</text><text x="1578" y="410" class="h" textLength="34" lengthAdjust="spacingAndGlyphs">18.00</text><text x="1578" y="448" class="h" textLength="34" lengthAdjust="spacingAndGlyphs">17.00</text>
<text x="1578" y="575" class="h" textLength="34" lengthAdjust="spacingAndGlyphs">40.00</text><text x="1578" y="623" class="h" textLength="34" lengthAdjust="spacingAndGlyphs">30.00</text><text x="1578" y="668" class="h" textLength="34" lengthAdjust="spacingAndGlyphs">20.00</text><text x="1578" y="716" class="h" textLength="34" lengthAdjust="spacingAndGlyphs">10.00</text><text x="1585" y="762" class="h" textLength="27" lengthAdjust="spacingAndGlyphs">0.00</text><text x="1572" y="810" class="h" textLength="40" lengthAdjust="spacingAndGlyphs">-10.00</text><text x="1572" y="855" class="h" textLength="40" lengthAdjust="spacingAndGlyphs">-20.00</text>
</g>

<!-- time axis -->
<g fill="#ff3232">
<text x="3" y="968" class="h" textLength="42" lengthAdjust="spacingAndGlyphs">2025年</text><text x="141" y="968" class="h" textLength="7" lengthAdjust="spacingAndGlyphs">8</text><text x="461" y="968" class="h" textLength="7" lengthAdjust="spacingAndGlyphs">9</text><text x="795" y="968" class="h" textLength="13" lengthAdjust="spacingAndGlyphs">10</text><text x="1053" y="968" class="h" textLength="13" lengthAdjust="spacingAndGlyphs">11</text><text x="1357" y="968" class="h" textLength="13" lengthAdjust="spacingAndGlyphs">12</text>
</g>
<text x="1589" y="967" fill="#c8c8c8" style="font-size:14px;text-anchor:middle">日线</text>

<!-- bottom buttons -->
<path class="ln" d="M40 971V987M72 971V987M108 971V987M164 971V987M219 971V987M251 971V987M283 971V987M340 971V987M396 971V987M441 971V987M519 971V987M552 971V987M583 971V987M624 971V987M666 971V987M697 971V987M729 971V987M785 971V987M828 971V987M873 971V987M930 971V987M972 971V987M1029 971V987M1062 971V987M1104 971V987M1160 971V987M1193 971V987M1249 971V987M1304 971V987M1360 971V987M1416 971V987M1432 971V987M1480 971V987M1520 971V987M1589 971V987"/>
<g>
<text x="21" y="983" class="tb">指标A</text><text x="56" y="983" class="tb">窗口</text><text x="90" y="983" class="tb">WOL</text><text x="136" y="983" class="tb">双紫擒龙</text><text x="191" y="983" class="tb">强势起爆</text><text x="235" y="983" class="tb">均线</text><text x="267" y="983" class="tb">擒龙</text><text x="311" y="983" class="tb">镇店之宝</text><text x="368" y="983" class="tb">飞碟妖龙</text><text x="418" y="983" class="tb">主进出</text><text x="480" y="983" class="tb">十全十美指标</text><text x="535" y="983" class="tb">加仓</text><text x="567" y="983" class="tb">转点</text><text x="603" y="983" class="tb">资金2</text><text x="645" y="983" class="tb" style="fill:#54ffff">宁波敢</text><text x="681" y="983" class="tb">AI龙</text><text x="713" y="983" class="tb">顶底</text><text x="757" y="983" class="tb">资金方向</text><text x="806" y="983" class="tb">主控盘</text><text x="850" y="983" class="tb">战神号</text><text x="901" y="983" class="tb">动能二号</text><text x="951" y="983" class="tb">飞碟妖</text><text x="1000" y="983" class="tb">财神到家</text><text x="1045" y="983" class="tb">暗盘</text><text x="1083" y="983" class="tb">全仓买</text><text x="1132" y="983" class="tb">游资量潮</text><text x="1176" y="983" class="tb">多空</text><text x="1221" y="983" class="tb">短线情绪</text><text x="1276" y="983" class="tb">神针启动</text><text x="1332" y="983" class="tb">冰火量能</text><text x="1388" y="983" class="tb">趋势多空</text><text x="1424" y="983" class="tb">〉</text>
<text x="1501" y="983" class="tb">指标B</text><text x="1543" y="983" class="tb">模 板</text><text x="1577" y="983" class="tb">+</text><text x="1601" y="983" class="tb">-</text>
</g>
<path class="ln" d="M40 988V1004M95 988V1004M153 988V1004M208 988V1004M263 988V1004M1516 988V1004M1564 988V1004"/>
<g>
<text x="20" y="1001" class="tb">扩展∧</text><text x="67" y="1001" class="tb">关联报价</text><text x="124" y="1001" class="tb">资金流向</text><text x="180" y="1001" class="tb" style="fill:#d0d000">综合资讯</text><text x="235" y="1001" class="tb" style="fill:#d0d000">板块资讯</text>
<text x="1540" y="1001" class="tb" style="fill:#d0d000">图文F10</text><text x="1589" y="1001" class="tb" style="fill:#d0d000">侧边栏《</text>
</g>
<path class="ln" d="M1644 988V1004M1675 988V1004M1706 988V1004M1737 988V1004M1768 988V1004M1799 988V1004M1830 988V1004M1861 988V1004"/>
<g fill="#c0c0c0">
<text x="1629" y="1002" style="font-size:14px;fill:#54ffff;text-anchor:middle">笔</text><text x="1660" y="1002" style="font-size:14px;text-anchor:middle">价</text><text x="1690" y="1002" style="font-size:14px;text-anchor:middle">细</text><text x="1721" y="1002" style="font-size:14px;text-anchor:middle">势</text><text x="1752" y="1002" style="font-size:14px;text-anchor:middle">联</text><text x="1783" y="1002" style="font-size:14px;text-anchor:middle">值</text><text x="1814" y="1002" style="font-size:14px;text-anchor:middle">主</text><text x="1845" y="1002" style="font-size:14px;text-anchor:middle">逆</text><text x="1878" y="1002" style="font-size:14px;text-anchor:middle">筹</text>
</g>

<!-- right panel -->
<text x="1633" y="51" fill="#54ffff" style="font-size:19px" textLength="76" lengthAdjust="spacingAndGlyphs">山金国际</text>
<text x="1713" y="51" fill="#a8a8a8" class="m" textLength="48">000975</text>
<text x="1766" y="44" fill="#ff3232" style="font-size:11px">R</text><text x="1765" y="54" fill="#ff3232" style="font-size:10px">300</text>
<text x="1618" y="78" fill="#ff3232" class="b" style="font-size:18px" textLength="49" lengthAdjust="spacingAndGlyphs">24.49</text>
<text x="1717" y="78" fill="#ff3232" class="b" style="font-size:18px" textLength="51" lengthAdjust="spacingAndGlyphs">▲0.21</text>
<text x="1837" y="78" fill="#ff3232" class="b" style="font-size:18px" textLength="55" lengthAdjust="spacingAndGlyphs">0.86%</text>
<path class="ln" d="M1614 86.500H1895M1614 270.500H1895M1614 367.500H1895M1614 429.500H1895M1614 449.500H1895M1614 472H1895"/>
<path d="M1615 178.500H1662" stroke="#d09030"/><path d="M1662 178.500H1895" stroke="#3a7fc0"/>
<g>
<text x="1617" y="102" class="c">卖五</text><text x="1617" y="120" class="c">卖四</text><text x="1617" y="138" class="c">卖三</text><text x="1617" y="156" class="c">卖二</text><text x="1617" y="174" class="c">卖一</text>
<text x="1617" y="193" class="c">买一</text><text x="1617" y="211" class="c">买二</text><text x="1617" y="229" class="c">买三</text><text x="1617" y="247" class="c">买四</text><text x="1617" y="265" class="c">买五</text>
<text x="1617" y="287" class="c">今开</text><text x="1617" y="306" class="c">最高</text><text x="1617" y="325" class="c">最低</text><text x="1617" y="344" class="c">现量</text><text x="1617" y="363" class="c">外盘</text>
<text x="1757" y="287" class="c">均价</text><text x="1757" y="306" class="c">量比</text><text x="1757" y="325" class="c">市值</text><text x="1757" y="344" class="c">总量</text><text x="1757" y="363" class="c">内盘</text>
<text x="1617" y="384" class="c">换手</text><text x="1617" y="403" class="c">净资</text><text x="1617" y="422" class="c" textLength="50" lengthAdjust="spacingAndGlyphs">收益(三)</text>
<text x="1757" y="384" class="c">股本</text><text x="1757" y="403" class="c">流通</text><text x="1757" y="422" class="c" textLength="42" lengthAdjust="spacingAndGlyphs">PE(动)</text>
<text x="1616" y="445" class="c" textLength="143">交易状态: 闭市阶段</text>
<text x="1617" y="466" class="c" textLength="67">主力净额</text>
</g>
<rect x="1689" y="454" width="11" height="12" rx="2" fill="#333" stroke="#888"/><path d="M1691 457h7M1691 460h7M1691 463h7" stroke="#aaa"/>
<rect x="1709" y="456" width="70" height="7" fill="#00e600"/>
<g>
<text x="1752" y="101" class="m e r">24.53</text><text x="1752" y="119" class="m e r">24.52</text><text x="1752" y="137" class="m e r">24.51</text><text x="1752" y="155" class="m e r">24.50</text><text x="1752" y="173" class="m e r">24.49</text>
<text x="1752" y="192" class="m e r">24.48</text><text x="1752" y="210" class="m e r">24.46</text><text x="1752" y="228" class="m e r">24.45</text><text x="1752" y="246" class="m e r">24.44</text><text x="1752" y="264" class="m e r">24.43</text>
<text x="1891" y="101" class="m e y">205</text><text x="1891" y="119" class="m e y">100</text><text x="1891" y="137" class="m e y">343</text><text x="1891" y="155" class="m e y">139</text><text x="1891" y="173" class="m e y">124</text>
<text x="1891" y="192" class="m e y">25</text><text x="1891" y="210" class="m e y">8</text><text x="1891" y="228" class="m e y">4</text><text x="1891" y="246" class="m e y">23</text><text x="1891" y="264" class="m e y">131</text>
<text x="1751" y="286" class="m e g">24.17</text><text x="1751" y="305" class="m e r">24.65</text><text x="1751" y="324" class="m e g">23.89</text><text x="1751" y="343" class="m e p">2148</text><text x="1751" y="362" class="m e r">174187</text>
<text x="1891" y="286" class="m e r">24.29</text><text x="1891" y="305" class="m e g">0.75</text><text x="1891" y="343" class="m e w">360464</text><text x="1891" y="362" class="m e g">186277</text>
<text x="1751" y="383" class="m e w">1.43%</text><text x="1751" y="402" class="m e w">5.20</text><text x="1751" y="421" class="m e w">0.890</text>
<text x="1891" y="421" class="m e w">20.7</text>
<text x="1820" y="444" class="m e w">15:00:00</text>
<text x="1854" y="465" class="m e g">-2636万</text><text x="1891" y="465" class="m e g">-3%</text>
</g>
<g>
<text x="1891" y="325" class="c e" style="font-size:14px;font-family:'DejaVu Sans Mono','Noto Sans CJK SC',monospace">680.0亿</text>
<text x="1891" y="384" class="c e" style="font-size:14px;font-family:'DejaVu Sans Mono','Noto Sans CJK SC',monospace">27.8亿</text>
<text x="1891" y="403" class="c e" style="font-size:14px;font-family:'DejaVu Sans Mono','Noto Sans CJK SC',monospace">25.3亿</text>
</g>

<!-- ticks -->
<path class="dot" d="M1617 599.500H1894M1617 941.500H1894M1617 959.500H1894"/>
<g>
<text x="1616" y="487" class="m w">14:55</text><text x="1616" y="613" class="m w">14:56</text><text x="1616" y="955" class="m w">14:57</text><text x="1616" y="973" class="m w">15:00</text>
<text x="1752" y="487" class="m e r">24.44</text><text x="1833" y="487" class="m e y">10</text><text x="1891" y="487" class="m e d">5</text>
<text x="1752" y="505" class="m e r">24.43</text><text x="1833" y="505" class="m e y">4</text><text x="1891" y="505" class="m e d">3</text>
<text x="1752" y="523" class="m e r">24.44</text><text x="1833" y="523" class="m e y">58</text><text x="1891" y="523" class="m e d">19</text>
<text x="1752" y="541" class="m e r">24.43</text><text x="1833" y="541" class="m e y">35</text><text x="1891" y="541" class="m e d">3</text>
<text x="1752" y="559" class="m e r">24.43</text><text x="1833" y="559" class="m e y">40</text><text x="1891" y="559" class="m e d">7</text>
<text x="1752" y="577" class="m e r">24.45</text><text x="1833" y="577" class="m e y">15</text><text x="1891" y="577" class="m e d">6</text>
<text x="1752" y="595" class="m e r">24.43</text><text x="1833" y="595" class="m e y">3</text><text x="1891" y="595" class="m e d">2</text>
<text x="1752" y="613" class="m e r">24.43</text><text x="1833" y="613" class="m e y">22</text><text x="1891" y="613" class="m e d">11</text>
<text x="1752" y="631" class="m e r">24.43</text><text x="1833" y="631" class="m e y">36</text><text x="1891" y="631" class="m e d">7</text>
<text x="1752" y="649" class="m e r">24.43</text><text x="1833" y="649" class="m e y">6</text><text x="1891" y="649" class="m e d">3</text>
<text x="1752" y="667" class="m e r">24.44</text><text x="1833" y="667" class="m e y">32</text><text x="1891" y="667" class="m e d">13</text>
<text x="1752" y="685" class="m e r">24.44</text><text x="1833" y="685" class="m e y">83</text><text x="1891" y="685" class="m e d">17</text>
<text x="1752" y="703" class="m e r">24.42</text><text x="1833" y="703" class="m e y">64</text><text x="1891" y="703" class="m e d">22</text>
<text x="1752" y="721" class="m e r">24.46</text><text x="1833" y="721" class="m e y">37</text><text x="1891" y="721" class="m e d">13</text>
<text x="1752" y="739" class="m e r">24.42</text><text x="1833" y="739" class="m e y">10</text><text x="1891" y="739" class="m e d">2</text>
<text x="1752" y="757" class="m e r">24.44</text><text x="1833" y="757" class="m e y">14</text><text x="1891" y="757" class="m e d">5</text>
<text x="1752" y="775" class="m e r">24.43</text><text x="1833" y="775" class="m e y">60</text><text x="1891" y="775" class="m e d">15</text>
<text x="1752" y="793" class="m e r">24.42</text><text x="1833" y="793" class="m e y">143</text><text x="1891" y="793" class="m e d">53</text>
<text x="1752" y="811" class="m e r">24.42</text><text x="1833" y="811" class="m e y">25</text><text x="1891" y="811" class="m e d">13</text>
<text x="1752" y="829" class="m e r">24.42</text><text x="1833" y="829" class="m e y">88</text><text x="1891" y="829" class="m e d">15</text>
<text x="1752" y="847" class="m e r">24.44</text><text x="1833" y="847" class="m e y">41</text><text x="1891" y="847" class="m e d">16</text>
<text x="1752" y="865" class="m e r">24.42</text><text x="1833" y="865" class="m e y">62</text><text x="1891" y="865" class="m e d">12</text>
<text x="1752" y="883" class="m e r">24.43</text><text x="1833" y="883" class="m e y">18</text><text x="1891" y="883" class="m e d">3</text>
<text x="1752" y="901" class="m e r">24.42</text><text x="1833" y="901" class="m e y">182</text><text x="1891" y="901" class="m e d">20</text>
<text x="1752" y="919" class="m e r">24.43</text><text x="1833" y="919" class="m e y">36</text><text x="1891" y="919" class="m e d">12</text>
<text x="1752" y="937" class="m e r">24.44</text><text x="1833" y="937" class="m e y">35</text><text x="1891" y="937" class="m e d">4</text>
<text x="1752" y="955" class="m e r">24.43</text><text x="1833" y="955" class="m e y">22</text><text x="1891" y="955" class="m e d">2</text>
<text x="1752" y="973" class="m e r">24.49</text><text x="1833" y="973" class="m e p">2148</text><text x="1891" y="973" class="m e d">169</text>
<text x="1856" y="487" class="m r mid">B</text><text x="1856" y="505" class="m g mid">S</text><text x="1856" y="523" class="m r mid">B</text><text x="1856" y="541" class="m g mid">S</text><text x="1856" y="559" class="m g mid">S</text><text x="1856" y="577" class="m r mid">B</text><text x="1856" y="595" class="m g mid">S</text><text x="1856" y="613" class="m g mid">S</text><text x="1856" y="631" class="m g mid">S</text><text x="1856" y="649" class="m g mid">S</text><text x="1856" y="667" class="m r mid">B</text><text x="1856" y="685" class="m g mid">S</text><text x="1856" y="703" class="m g mid">S</text><text x="1856" y="721" class="m r mid">B</text><text x="1856" y="739" class="m g mid">S</text><text x="1856" y="757" class="m g mid">S</text><text x="1856" y="793" class="m g mid">S</text><text x="1856" y="811" class="m g mid">S</text><text x="1856" y="829" class="m g mid">S</text><text x="1856" y="847" class="m r mid">B</text><text x="1856" y="865" class="m g mid">S</text><text x="1856" y="901" class="m g mid">S</text><text x="1856" y="937" class="m r mid">B</text><text x="1856" y="955" class="m r mid">B</text>
</g>

<!-- news -->
<rect x="0" y="1005" width="1895" height="23" fill="#2c3038"/>
<g fill="#e4e4e4">
<text x="0" y="1021">券发行与上市提示</text>
<text x="140" y="1021" textLength="202">[临时停牌]东方智造(002175)临时停牌</text>
<text x="383" y="1021" textLength="214">[发行与上市提示]可转债发行与上市提示</text>
<text x="640" y="1021" textLength="237">[深交所公告]深市上市公司公告(2025.12.15)</text>
<text x="920" y="1021" textLength="236">[上交所公告]沪市上市公司公告(2025.12.15)</text>
<text x="1199" y="1021" textLength="202">[发行与上市提示]北交所新股发行提示</text>
<text x="1444" y="1021" textLength="237">[发行与上市提示]北交所新股发行与上市提示</text>
<text x="1724" y="1021" textLength="171">[发行与上市提示]公司发行审核</text>
</g>

<!-- status -->
<rect x="0" y="1028" width="1895" height="22" fill="#22272e"/>
<circle cx="12" cy="1040" r="5.500" fill="#6c7480"/><path d="M9.500 1039l2.500 2.500 2.500-2.500" stroke="#222" fill="none"/>
<g>
<text x="24" y="1045" fill="#fff" style="font-size:14px" textLength="30" lengthAdjust="spacingAndGlyphs">上证</text>
<text x="61" y="1045" fill="#3cc878" style="font-size:14px" textLength="50" lengthAdjust="spacingAndGlyphs">3867.92</text>
<text x="130" y="1045" fill="#3cc878" style="font-size:14px" textLength="40" lengthAdjust="spacingAndGlyphs">-21.43</text>
<text x="184" y="1045" fill="#3cc878" style="font-size:14px" textLength="44" lengthAdjust="spacingAndGlyphs">-0.55%</text>
<text x="241" y="1045" fill="#fff" style="font-size:14px" textLength="45" lengthAdjust="spacingAndGlyphs">7646亿</text>
<text x="299" y="1045" fill="#fff" style="font-size:14px" textLength="29" lengthAdjust="spacingAndGlyphs">深证</text>
<text x="336" y="1045" fill="#3cc878" style="font-size:14px" textLength="56" lengthAdjust="spacingAndGlyphs">13112.09</text>
<text x="400" y="1045" fill="#3cc878" style="font-size:14px" textLength="48" lengthAdjust="spacingAndGlyphs">-146.24</text>
<text x="458" y="1045" fill="#3cc878" style="font-size:14px" textLength="44" lengthAdjust="spacingAndGlyphs">-1.10%</text>
<text x="516" y="1045" fill="#fff" style="font-size:14px" textLength="50" lengthAdjust="spacingAndGlyphs">10088亿</text>
<text x="574" y="1045" fill="#fff" style="font-size:14px" textLength="29" lengthAdjust="spacingAndGlyphs">创业</text>
<text x="610" y="1045" fill="#3cc878" style="font-size:14px" textLength="50" lengthAdjust="spacingAndGlyphs">3137.80</text>
<text x="680" y="1045" fill="#3cc878" style="font-size:14px" textLength="40" lengthAdjust="spacingAndGlyphs">-56.56</text>
<text x="733" y="1045" fill="#3cc878" style="font-size:14px" textLength="44" lengthAdjust="spacingAndGlyphs">-1.77%</text>
<text x="790" y="1045" fill="#fff" style="font-size:14px" textLength="46" lengthAdjust="spacingAndGlyphs">4721亿</text>
<text x="852" y="1045" fill="#fff" style="font-size:14px" textLength="43" lengthAdjust="spacingAndGlyphs">总成交</text>
<text x="903" y="1045" fill="#fff" style="font-size:14px" textLength="52" lengthAdjust="spacingAndGlyphs">17945亿</text>
</g>
<circle cx="971" cy="1040" r="6" fill="#7a828e"/><path d="M969 1044l4-8" stroke="#222"/>
<rect x="985" y="1033" width="12" height="15" rx="3" fill="#5a6474"/><text x="988" y="1045" fill="#fff" style="font-size:11px">3</text>
<text x="1001" y="1045" fill="#fff" style="font-size:13px" textLength="37">已连接</text>
<rect x="1726" y="1033" width="14" height="13" rx="2" fill="#8a94a6"/><path d="M1729 1037h2M1735 1037h2M1729 1042h8" stroke="#22272e" stroke-width="1.500"/>
<path d="M1760 1034v12M1768 1032v16" stroke="#8a94a6" stroke-width="4"/>
<circle cx="1793" cy="1040" r="6" fill="none" stroke="#8a94a6" stroke-dasharray="3 2" stroke-width="1.500"/><path d="M1791 1040l2-3 2 3z" fill="#8a94a6"/>
<path d="M1819 1047l1-11h6l1 11zM1818 1033l2 3M1823 1032v3M1828 1033l-2 3" fill="#e8e8e8" stroke="#e8e8e8"/>
<text x="1845" y="1045" fill="#c8bc8c" style="font-size:13px" textLength="47" lengthAdjust="spacingAndGlyphs">15:39:33</text>

<!-- sidebar -->
<rect x="1895" y="31" width="25" height="1019" fill="#f0f0f0"/>
<path d="M1895 31V1050" stroke="#e0e0e0"/>
<g fill="#fff" stroke="#3f8fe0" stroke-width="1.300">
<path d="M1899 42l7-8v4h10v8h-10v4z"/><path d="M1908 55l8 7h-4v10h-8v-10h-4z"/><path d="M1904 79h8v10h4l-8 8-8-8h4z"/>
</g>
<g>
<rect x="1901" y="103" width="14" height="16" class="ib"/><path d="M1903 107h10" stroke="#e03030" stroke-width="2"/><path d="M1903 111h10" stroke="#30a030" stroke-width="2"/><path d="M1903 115h10" stroke="#888" stroke-width="2"/>
<rect x="1901" y="125" width="14" height="16" class="ib"/><path d="M1903 128h10M1903 131h10M1903 134h10M1903 137h10" stroke="#208040" stroke-width="1.500" stroke-dasharray="2 1"/>
<rect x="1901" y="148" width="14" height="16" class="ib"/><path d="M1903 161l3-5 3 2 4-6" fill="none" stroke="#e03030"/>
<rect x="1901" y="171" width="14" height="16" class="ib"/><path d="M1905 173v12" stroke="#20a040" stroke-width="2"/><path d="M1910 175v10" stroke="#e03030" stroke-width="3"/>
<rect x="1901" y="196" width="14" height="13" class="ib"/><path d="M1903 199h10M1903 202h10M1903 205h10" stroke="#606060"/>
<rect x="1901" y="219" width="15" height="15" class="ib"/><text x="1908.500" y="231" fill="#1050c0" style="font-size:11px;text-anchor:middle">F10</text>
<rect x="1901" y="242" width="15" height="15" fill="#fff" stroke="#f0b040"/><path d="M1904 245h3v3h-3zM1909 249h4v3h-4zM1905 253h4v2h-4z" fill="#f0a000"/>
<rect x="1901" y="264" width="15" height="15" class="ib"/><text x="1908.500" y="276" fill="#f06000" style="font-size:12px;text-anchor:middle">自</text>
<rect x="1901" y="288" width="15" height="15" class="ib"/><text x="1908.500" y="300" fill="#1050c0" style="font-size:11px;text-anchor:middle">F12</text>
<rect x="1901" y="311" width="15" height="15" rx="3" fill="#fff" stroke="#308090" stroke-width="1.400"/><text x="1908.500" y="322" fill="#003399" style="font-size:10px;text-anchor:middle;font-style:italic">f(x)</text>
<rect x="1901" y="334" width="15" height="14" class="ib"/><circle cx="1908.500" cy="341" r="4" fill="none" stroke="#1e78e0" stroke-width="1.300"/>
<path d="M1899 356.500H1918M1899 479.500H1918" stroke="#b0b0b0"/>
<rect x="1901" y="365" width="15" height="13" class="ib"/><path d="M1903 371l3-2 3 2 4-2M1903 375l3-2 3 2 4-2" fill="none" stroke="#e03030"/>
<text x="1908" y="400" fill="#2040c0" class="b" style="font-size:11px;text-anchor:middle" textLength="16" lengthAdjust="spacingAndGlyphs">RSI</text>
<text x="1908" y="424" fill="#d02828" class="b" style="font-size:15px;text-anchor:middle">S</text>
<path d="M1908 434l3 4h-2v3h3v-2l4 3-4 3v-2h-3v3h2l-3 4-3-4h2v-3h-3v2l-4-3 4-3v2h3v-3h-2z" fill="#1050c0"/>
<path d="M1901 471l2-5 11-10 3 3-11 10z" fill="#f0b040" stroke="#a07030" stroke-width=".7"/>
<rect x="1901" y="488" width="15" height="15" class="ib"/><text x="1908.500" y="500" fill="#1050c0" style="font-size:11px;text-anchor:middle">FS</text>
<rect x="1901" y="511" width="15" height="14" fill="#fff" stroke="#7aa8e0"/><circle cx="1908.500" cy="518" r="5" fill="none" stroke="#30b040" stroke-width="2.500"/>
</g>
<rect x="1897" y="646" width="22" height="23" fill="#f8f8f8" stroke="#b4b4b4"/>
<g>
<text x="1907" y="545" class="bl">1</text><text x="1907" y="568" class="bl">5</text><text x="1907" y="591" class="bl">15</text><text x="1907" y="614" class="bl">30</text><text x="1907" y="637" class="bl">60</text><text x="1908" y="662" class="bl">日</text><text x="1908" y="685" class="bl">周</text><text x="1908" y="708" class="bl">月</text><text x="1908" y="730" class="bl">N</text><text x="1908" y="754" class="bl">多</text><text x="1908" y="777" class="bl">季</text><text x="1908" y="799" class="bl">年</text>
</g>
</svg>
</body></html>
